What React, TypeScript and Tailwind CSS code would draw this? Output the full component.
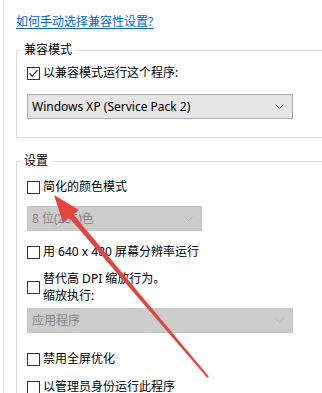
const font = { fontFamily: '"Noto Sans", "Noto Sans CJK SC", sans-serif' };

function Box({ checked = false }: { checked?: boolean }) {
  return (
    <span className="w-[13px] h-[13px] shrink-0 border border-[#333333] bg-white flex items-center justify-center">
      {checked && (
        <svg width="11" height="11" viewBox="0 0 11 11">
          <path d="M1.5 5.5 L4.2 8.2 L9.5 2.2" fill="none" stroke="#222" strokeWidth="1.2" />
        </svg>
      )}
    </span>
  );
}

function Row({ label, checked, className = "" }: { label: string; checked?: boolean; className?: string }) {
  return (
    <div className={`flex items-center gap-[3px] h-[16px] ${className}`}>
      <Box checked={checked} />
      <span className="text-[12px] leading-[16px] text-black whitespace-nowrap">{label}</span>
    </div>
  );
}

function Select({ value, width, disabled = false, className = "" }: { value: string; width: string; disabled?: boolean; className?: string }) {
  return (
    <div
      className={`${width} h-[25px] flex items-center justify-between pl-[4px] pr-[8px] border ${
        disabled ? "bg-[#cccccc] border-[#c4c4c4] text-[#838383]" : "bg-[#e5e5e5] border-[#adadad] text-black"
      } ${className}`}
    >
      <span className="text-[12px] leading-[16px] whitespace-nowrap">{value}</span>
      <svg width="9" height="5" viewBox="0 0 9 5">
        <path d="M0.5 0.5 L4.5 4.5 L8.5 0.5" fill="none" stroke={disabled ? "#b5b5b5" : "#606060"} strokeWidth="1" />
      </svg>
    </div>
  );
}

export default function App() {
  return (
    <div className="w-[322px] h-[393px] overflow-hidden bg-white relative" style={font}>
      <div className="ml-[3px] h-full border-l border-[#e3e3e3] pl-[12px] pt-[8px]">
        <a className="text-[12px] leading-[16px] text-[#0066cc] underline underline-offset-2">如何手动选择兼容性设置?</a>

        <fieldset className="mt-[10px] w-[330px] border border-[#dcdcdc] pb-[18px]">
          <legend className="ml-[4px] px-[3px] text-[12px] leading-[16px] text-black">兼容模式</legend>
          <div className="pl-[10px]">
            <Row label="以兼容模式运行这个程序:" checked className="mt-[7px]" />
            <Select value="Windows XP (Service Pack 2)" width="w-[266px]" className="mt-[13px]" />
          </div>
        </fieldset>

        <fieldset className="mt-[15px] w-[330px] h-[300px] border border-[#dcdcdc]">
          <legend className="ml-[4px] px-[3px] text-[12px] leading-[16px] text-black">设置</legend>
          <div className="pl-[10px]">
            <Row label="简化的颜色模式" className="mt-[10px]" />
            <Select value="8 位(256)色" width="w-[175px]" disabled className="mt-[11px]" />
            <Row label="用 640 x 480 屏幕分辨率运行" className="mt-[13px]" />
            <div className="mt-[10px] flex items-center gap-[3px]">
              <Box />
              <div className="text-[12px] leading-[17px] text-black">
                <div>替代高 DPI 缩放行为。</div>
                <div>缩放执行:</div>
              </div>
            </div>
            <Select value="应用程序" width="w-[266px]" disabled className="mt-[4px]" />
            <Row label="禁用全屏优化" className="mt-[18px]" />
            <Row label="以管理员身份运行此程序" className="mt-[12px]" />
          </div>
        </fieldset>
      </div>

      <svg className="absolute left-0 top-0 pointer-events-none" width="322" height="393" viewBox="0 0 322 393">
        <polygon points="54,195 63,223 79,210" fill="#e2453f" />
        <polygon points="69,217.5 73,214 208.8,376.4 207.2,377.7" fill="#e2453f" />
      </svg>
    </div>
  );
}
